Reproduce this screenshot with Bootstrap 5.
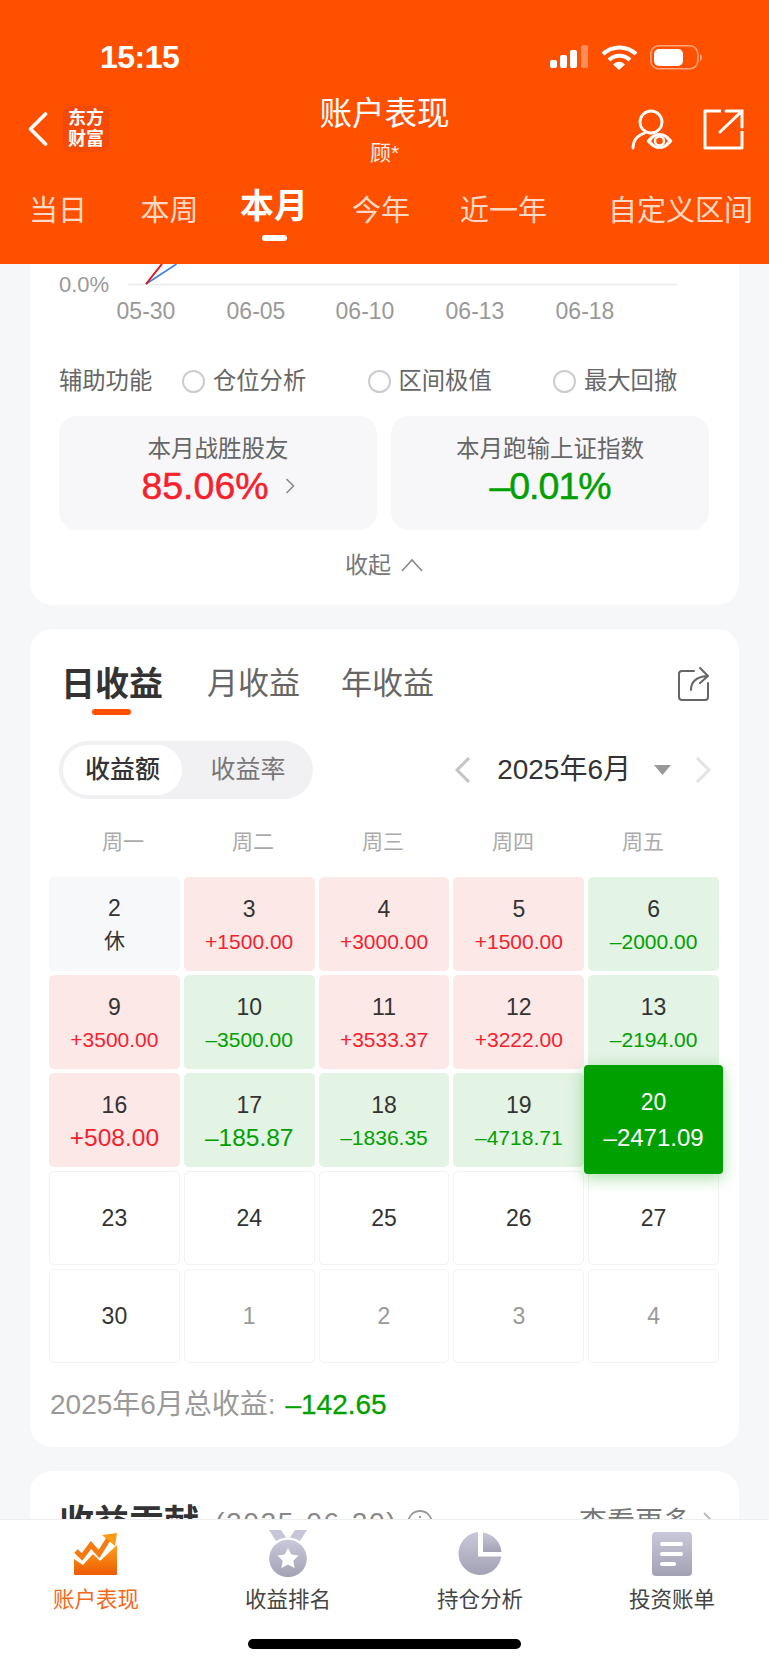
<!DOCTYPE html>
<html lang="zh">

<head>
  <meta charset="utf-8">
  <meta name="viewport" content="width=device-width">
  <title>账户表现</title>
  <link href="https://cdn.jsdelivr.net/npm/bootstrap@5.3.2/dist/css/bootstrap.min.css" rel="stylesheet" type="text/css" />
  <style>
    body {
      height: 1665px;
      background: #f6f7f9;
      font-family: "Liberation Sans", "Noto Sans CJK SC", sans-serif;
      color: #333;
    }

    .top-head { height: 264px; background: #ff5000; color: #fff; }
    .status-row { height: 89px; padding: 42px 65px 0 100px; }
    .status-row svg { margin-top: 3px; }
    .clock { font-size: 32px; font-weight: 700; line-height: 30px; letter-spacing: -.5px; }
    .title-row { height: 80px; padding: 0 25px 0 28px; }
    .logo-box { width: 46px; height: 46px; margin-left: 15px; background: #f44a08; border-radius: 8px; font-size: 18px; line-height: 21px; font-weight: 700; }
    .title-icons { gap: 28px; }
    .title-main { font-size: 32.5px; line-height: 40px; }
    .title-sub { font-size: 21px; line-height: 28px; margin-top: 5px; opacity: .9; }
    .title-mid { position: absolute; left: 0; right: 0; top: 94px; }
    .range-tabs { padding-left: 29px; margin-top: 22px; }
    .range-tabs span { font-size: 29px; line-height: 40px; color: #ffd9c6; }
    .range-tabs .rt-2 { margin-left: 53.5px; }
    .range-tabs .rt-3 { margin-left: 41.5px; font-size: 34px; font-weight: 700; color: #fff; position: relative; top: -5px; }
    .range-tabs .rt-3::after { content: ""; position: absolute; left: 22px; top: 49px; width: 25px; height: 6px; border-radius: 3px; background: #fff; }
    .range-tabs .rt-4 { margin-left: 44px; }
    .range-tabs .rt-5 { margin-left: 50px; }
    .range-tabs .rt-6 { margin-left: 61px; }

    .scroll-area { height: 1255px; overflow: hidden; padding: 0 30px; }
    .white-panel { background: #fff; border-radius: 22px; }
    .panel-one { height: 341px; margin-bottom: 24px; border-radius: 0 0 22px 22px; padding: 0 30px 0 29px; }
    .panel-two { height: 818px; margin-bottom: 24px; padding: 0 19px; }
    .panel-three { padding: 30px 24px 30px 29px; }

    .chart-svg { display: block; margin: 0 -29px; }
    .helper-row { margin-top: 38px; height: 34px; font-size: 23.3px; color: #666; }
    .helper-name { flex: 0 0 123px; }
    .helper-item { flex: 0 0 185.5px; gap: 8px; }
    .radio-dot { width: 23px; height: 23px; border: 2px solid #ccc; border-radius: 50%; }
    .stat-rows { margin-top: 18px; }
    .stat-box { width: 318px; height: 114px; background: #f7f7f9; border-radius: 18px; text-align: center; padding-top: 18px; }
    .stat-label { font-size: 23.5px; line-height: 30px; color: #666; }
    .stat-value { font-size: 37.5px; line-height: 44px; font-weight: 500; -webkit-text-stroke: .5px currentColor; }
    .stat-tight { letter-spacing: -1px; }
    .up-red { color: #f5222d; }
    .down-green { color: #00a000; }
    .fold-row { margin-top: 18px; font-size: 23px; color: #777; gap: 10px; }

    .profit-tabs { padding: 32px 10px 0 12px; height: 87px; }
    .profit-tabs span { font-size: 31px; line-height: 46px; color: #666; }
    .profit-tabs .tab-on { font-size: 34px; font-weight: 700; color: #333; margin-right: 44px; position: relative; }
    .profit-tabs .tab-on::after { content: ""; position: absolute; left: 31px; top: 48px; width: 39px; height: 6px; border-radius: 3px; background: #ff5000; }
    .profit-tabs .tab-year { margin-left: 41px; }
    .share-ic { margin-top: 6px; }
    .seg-row { margin-top: 25px; padding: 0 8px 0 10px; }
    .seg-wrap { width: 254px; height: 58px; background: #f1f1f4; border-radius: 29px; padding: 4px; font-size: 25px; color: #777; }
    .seg-on { width: 119px; height: 50px; background: #fff; border-radius: 25px; color: #333; font-weight: 500; }
    .seg-off { flex: 1; padding-left: 5px; }
    .month-txt { font-size: 28px; color: #333; margin: 0 23px 0 26px; }
    .week-row { margin-top: 28px; height: 30px; margin-bottom: 20px; padding-left: 9px; }
    .week-row span { flex: 0 0 130px; text-align: center; font-size: 21px; line-height: 30px; color: #aaa; }
    .cal-grid { display: grid; grid-template-columns: repeat(5, 130.8px); grid-auto-rows: 94px; gap: 4px; }
    .cal-cell { border-radius: 5px; text-align: center; display: flex; flex-direction: column; justify-content: center; border: 1px solid #f3f3f3; font-size: 23px; font-weight: 500; line-height: 34px; }
    .cal-cell small { font-size: 21px; font-weight: 400; line-height: 32px; display: block; }
    .c-up { background: #fde8e8; border: 0; padding-top: 1px; }
    .c-up small { color: #f5222d; }
    .c-dn { background: #e3f3e4; border: 0; padding-top: 1px; }
    .c-dn small { color: #00a000; }
    .c-rest { background: #f7f8fa; border: 0; font-weight: 400; }
    .c-next { color: #999; font-weight: 400; }
    .big-val small { font-size: 24.5px; }
    .mid-val small { font-size: 21px; }
    .c-now { position: relative; z-index: 2; margin: -8px -4px -7px -4px; background: #00a000; border: 0; border-radius: 4px; color: #fff; box-shadow: 0 4px 16px rgba(0, 160, 0, .35); line-height: 36px; font-size: 23px; }
    .c-now small { color: #fff; font-size: 24px; line-height: 36px; font-weight: 500; }
    .total-row { margin-top: 23px; font-size: 28px; line-height: 38px; color: #999; padding-left: 1px; }
    .total-row b { font-weight: 500; color: #00a000; margin-left: 2px; -webkit-text-stroke: .3px currentColor; }

    .rank-title { font-size: 35px; font-weight: 700; line-height: 44px; }
    .rank-date { font-size: 28px; color: #888; margin-left: 16px; letter-spacing: 1.7px; }
    .rank-info { margin-left: 10px; }
    .rank-more { font-size: 28px; color: #777; }
    .rank-arrow { margin-left: 12px; }

    .bottom-bar { height: 146px; background: #fff; border-top: 1px solid #eee; padding-top: 10px; position: relative; }
    .bar-item { width: 192px; text-align: center; font-size: 21.5px; line-height: 30px; color: #444; }
    .bar-item svg { display: block; margin: 0 auto 7px; }
    .bar-on { color: #f4681c; }
    .home-line { position: absolute; left: 248px; bottom: 16px; width: 273px; height: 10px; background: #000; border-radius: 5px; }
  </style>
</head>

<body class="d-flex flex-column overflow-hidden">
  <header class="top-head position-relative">
    <div class="status-row d-flex justify-content-between">
      <div class="clock">15:15</div>
      <svg width="154" height="25" viewBox="0 0 154 25">
        <rect x="0" y="15" width="7" height="8" rx="2" fill="#fff" />
        <rect x="10" y="10" width="7" height="13" rx="2" fill="#fff" />
        <rect x="20" y="5" width="7" height="18" rx="2" fill="#fff" />
        <rect x="31" y="0" width="7" height="23" rx="2" fill="#fff" opacity=".35" />
        <path d="M53 9a24 24 0 0 1 33 0M59 15a15 15 0 0 1 21 0" fill="none" stroke="#fff" stroke-width="4" />
        <path d="M63 19.500a8 8 0 0 1 12 0L69 25z" fill="#fff" />
        <rect x="100.800" y=".8" width="47" height="23" rx="8" fill="none" stroke="#fff" stroke-opacity=".5" stroke-width="1.600" />
        <rect x="104" y="4" width="29" height="17" rx="5" fill="#fff" />
        <path d="M150 9a4 4 0 0 1 0 7z" fill="#fff" fill-opacity=".5" />
      </svg>
    </div>
    <div class="title-row d-flex align-items-center justify-content-between">
      <div class="d-flex align-items-center">
        <svg width="20" height="34" viewBox="0 0 20 34">
          <path d="M17.500 2 2.500 17l15 15" fill="none" stroke="#fff" stroke-width="3.600" stroke-linecap="round" stroke-linejoin="round" />
        </svg>
        <div class="logo-box d-flex align-items-center justify-content-center text-center">东方<br>财富</div>
      </div>
      <div class="title-icons d-flex align-items-center">
        <svg width="44" height="42" viewBox="0 0 44 42">
          <circle cx="20" cy="14" r="11" fill="none" stroke="#fff" stroke-width="2.800" />
          <path d="M2 40c0-8 5-13 12-15" fill="none" stroke="#fff" stroke-width="2.800" stroke-linecap="round" />
          <path d="M16 33c7-10 18-10 25 0-7 10-18 10-25 0z" fill="#fff" stroke="#fff" stroke-width="1" />
          <path d="M20 33c5-7 12-7 17 0-5 7-12 7-17 0z" fill="#ff5000" />
          <circle cx="28.500" cy="33" r="4.500" fill="none" stroke="#fff" stroke-width="2.400" />
        </svg>
        <svg width="41" height="41" viewBox="0 0 41 41">
          <path d="M18 2H2v37h37V22" fill="none" stroke="#fff" stroke-width="3" stroke-linejoin="round" />
          <path d="M17 23 38 3M23 2h16v16" fill="none" stroke="#fff" stroke-width="3" stroke-linecap="round" />
        </svg>
      </div>
    </div>
    <div class="title-mid text-center">
      <div class="title-main">账户表现</div>
      <div class="title-sub">顾*</div>
    </div>
    <nav class="range-tabs d-flex text-nowrap">
      <span>当日</span><span class="rt-2">本周</span><span class="rt-3">本月</span><span class="rt-4">今年</span><span class="rt-5">近一年</span><span class="rt-6">自定义区间</span>
    </nav>
  </header>

  <main class="scroll-area">
    <section class="white-panel panel-one">
      <svg class="chart-svg" width="709" height="62" viewBox="0 0 709 62">
        <text x="29" y="28" font-size="22" fill="#999">0.0%</text>
        <path d="M98 20.500H647" stroke="#ececef" stroke-width="1.500" />
        <path d="M116 20 146.500 0" stroke="#3d7fe8" stroke-width="1.600" fill="none" />
        <path d="M116 20 132 0" stroke="#e8121c" stroke-width="2" fill="none" />
        <g font-size="23" fill="#999" text-anchor="middle">
          <text x="116" y="55">05-30</text>
          <text x="226" y="55">06-05</text>
          <text x="335" y="55">06-10</text>
          <text x="445" y="55">06-13</text>
          <text x="555" y="55">06-18</text>
        </g>
      </svg>
      <div class="helper-row d-flex align-items-center">
        <span class="helper-name">辅助功能</span>
        <div class="helper-item d-flex align-items-center"><i class="radio-dot"></i>仓位分析</div>
        <div class="helper-item d-flex align-items-center"><i class="radio-dot"></i>区间极值</div>
        <div class="helper-item d-flex align-items-center"><i class="radio-dot"></i>最大回撤</div>
      </div>
      <div class="stat-rows d-flex justify-content-between">
        <div class="stat-box">
          <div class="stat-label">本月战胜股友</div>
          <div class="stat-value up-red d-flex justify-content-center align-items-center gap-3">85.06%
            <svg width="10" height="18" viewBox="0 0 10 18"><path d="m1.500 2 7 7-7 7" fill="none" stroke="#888" stroke-width="1.600" /></svg>
          </div>
        </div>
        <div class="stat-box">
          <div class="stat-label">本月跑输上证指数</div>
          <div class="stat-value stat-tight down-green">–0.01%</div>
        </div>
      </div>
      <div class="fold-row d-flex justify-content-center align-items-center">收起
        <svg width="22" height="14" viewBox="0 0 22 14"><path d="m1 13 10-11 10 11" fill="none" stroke="#888" stroke-width="1.600" /></svg>
      </div>
    </section>

    <section class="white-panel panel-two">
      <div class="profit-tabs d-flex align-items-start">
        <span class="tab-on">日收益</span><span>月收益</span><span class="tab-year">年收益</span>
        <svg class="share-ic ms-auto" width="33" height="34" viewBox="0 0 33 34">
          <path d="M17 4H5a3 3 0 0 0-3 3v23a3 3 0 0 0 3 3h23a3 3 0 0 0 3-3V16" fill="none" stroke="#666" stroke-width="2" stroke-linecap="round" />
          <path d="M14 23c0-8 5-13 16-14M23 1l8 8-8 7" fill="none" stroke="#666" stroke-width="2" stroke-linecap="round" stroke-linejoin="round" />
        </svg>
      </div>
      <div class="seg-row d-flex justify-content-between align-items-center">
        <div class="seg-wrap d-flex align-items-center text-center">
          <div class="seg-on d-flex align-items-center justify-content-center">收益额</div>
          <div class="seg-off">收益率</div>
        </div>
        <div class="d-flex align-items-center">
          <svg width="17" height="26" viewBox="0 0 17 26"><path d="M15 1 3 13l12 12" fill="none" stroke="#c4c4c4" stroke-width="3" /></svg>
          <span class="month-txt">2025年6月</span>
          <svg width="17" height="10" viewBox="0 0 17 10"><path d="M0 0h17L8.500 10z" fill="#999" /></svg>
          <svg class="ms-4" width="17" height="26" viewBox="0 0 17 26"><path d="m2 1 12 12L2 25" fill="none" stroke="#e4e4e4" stroke-width="3" /></svg>
        </div>
      </div>
      <div class="week-row d-flex">
        <span>周一</span><span>周二</span><span>周三</span><span>周四</span><span>周五</span>
      </div>
      <div class="cal-grid" id="calGrid"></div>
      <div class="total-row">2025年6月总收益: <b>–142.65</b></div>
    </section>

    <section class="white-panel panel-three d-flex align-items-center">
      <span class="rank-title">收益贡献</span>
      <span class="rank-date">(2025-06-20)</span>
      <svg class="rank-info" width="26" height="26" viewBox="0 0 26 26"><circle cx="13" cy="13" r="12" fill="none" stroke="#999" stroke-width="1.800" /><path d="M13 6v2M13 11v9" stroke="#999" stroke-width="2" /></svg>
      <span class="rank-more ms-auto">查看更多</span>
      <svg class="rank-arrow" width="12" height="22" viewBox="0 0 12 22"><path d="m1 1 10 10L1 21" fill="none" stroke="#bbb" stroke-width="2" /></svg>
    </section>
  </main>

  <footer class="bottom-bar d-flex text-nowrap">
    <div class="bar-item bar-on">
      <svg width="44" height="48" viewBox="0 -2 44 48">
        <defs>
          <linearGradient id="gOrange" x1="0" y1="0" x2="0" y2="1"><stop offset="0" stop-color="#ffa11c" /><stop offset="1" stop-color="#ee5a00" /></linearGradient>
          <linearGradient id="gGrey" x1="0" y1="0" x2="0" y2="1"><stop offset="0" stop-color="#c9c8da" /><stop offset="1" stop-color="#a3a2b4" /></linearGradient>
        </defs>
        <path d="M0 27 9 33 19 22 26 29 43 13V42a1 1 0 0 1-1 1H1a1 1 0 0 1-1-1z" fill="url(#gOrange)" />
        <path d="M2 19 8 25 17 13 25 22 35 6" fill="none" stroke="#f77a10" stroke-width="5" />
        <path d="M28 3 43 1 41 14z" fill="#fb9a14" />
      </svg>
      账户表现
    </div>
    <div class="bar-item">
      <svg width="44" height="48" viewBox="0 0 44 48">
        <path d="M3 0h12l6 9-9 5zM41 0H29l-6 9 9 5z" fill="#c7c6d8" />
        <circle cx="22" cy="28.500" r="21" fill="#fff" />
        <circle cx="22" cy="28.500" r="18.800" fill="url(#gGrey)" />
        <path d="m22 18 3.300 6.600 7.200 1-5.200 5.100 1.300 7.300-6.600-3.500-6.600 3.500 1.300-7.300-5.200-5.100 7.200-1z" fill="#fff" />
      </svg>
      收益排名
    </div>
    <div class="bar-item">
      <svg width="44" height="48" viewBox="0 -2 44 48">
        <path d="M20 .1A21.500 21.500 0 1 0 43.300 24.500H20z" fill="url(#gGrey)" />
        <path d="M25 .6A21.500 21.500 0 0 1 43.500 20H25z" fill="url(#gGrey)" />
      </svg>
      持仓分析
    </div>
    <div class="bar-item">
      <svg width="40" height="48" viewBox="0 -2 40 48">
        <rect width="40" height="44" rx="4" fill="url(#gGrey)" />
        <rect x="8" y="10" width="23" height="4" rx="2" fill="#fff" />
        <rect x="8" y="20" width="23" height="4" rx="2" fill="#fff" />
        <rect x="8" y="30" width="16" height="4" rx="2" fill="#fff" />
      </svg>
      投资账单
    </div>
    <div class="home-line"></div>
  </footer>

  <script>
    const calGrid = document.querySelector('#calGrid');
    const days = [
      ['2', '休', 'c-rest'], ['3', '+1500.00', 'c-up'], ['4', '+3000.00', 'c-up'], ['5', '+1500.00', 'c-up'], ['6', '–2000.00', 'c-dn'],
      ['9', '+3500.00', 'c-up'], ['10', '–3500.00', 'c-dn'], ['11', '+3533.37', 'c-up'], ['12', '+3222.00', 'c-up'], ['13', '–2194.00', 'c-dn'],
      ['16', '+508.00', 'c-up big-val'], ['17', '–185.87', 'c-dn big-val'], ['18', '–1836.35', 'c-dn mid-val'], ['19', '–4718.71', 'c-dn mid-val'], ['20', '–2471.09', 'c-now'],
      ['23', '', ''], ['24', '', ''], ['25', '', ''], ['26', '', ''], ['27', '', ''],
      ['30', '', ''], ['1', '', 'c-next'], ['2', '', 'c-next'], ['3', '', 'c-next'], ['4', '', 'c-next']
    ];
    for (let i = 0; i < days.length; i++) {
      const cell = document.createElement('div');
      cell.className = 'cal-cell ' + days[i][2];
      cell.textContent = days[i][0];
      if (days[i][1]) {
        const val = document.createElement('small');
        val.textContent = days[i][1];
        cell.appendChild(val);
      }
      calGrid.appendChild(cell);
    }
  </script>
  <script src="https://cdn.jsdelivr.net/npm/bootstrap@5.3.2/dist/js/bootstrap.bundle.min.js"></script>
</body>

</html>
